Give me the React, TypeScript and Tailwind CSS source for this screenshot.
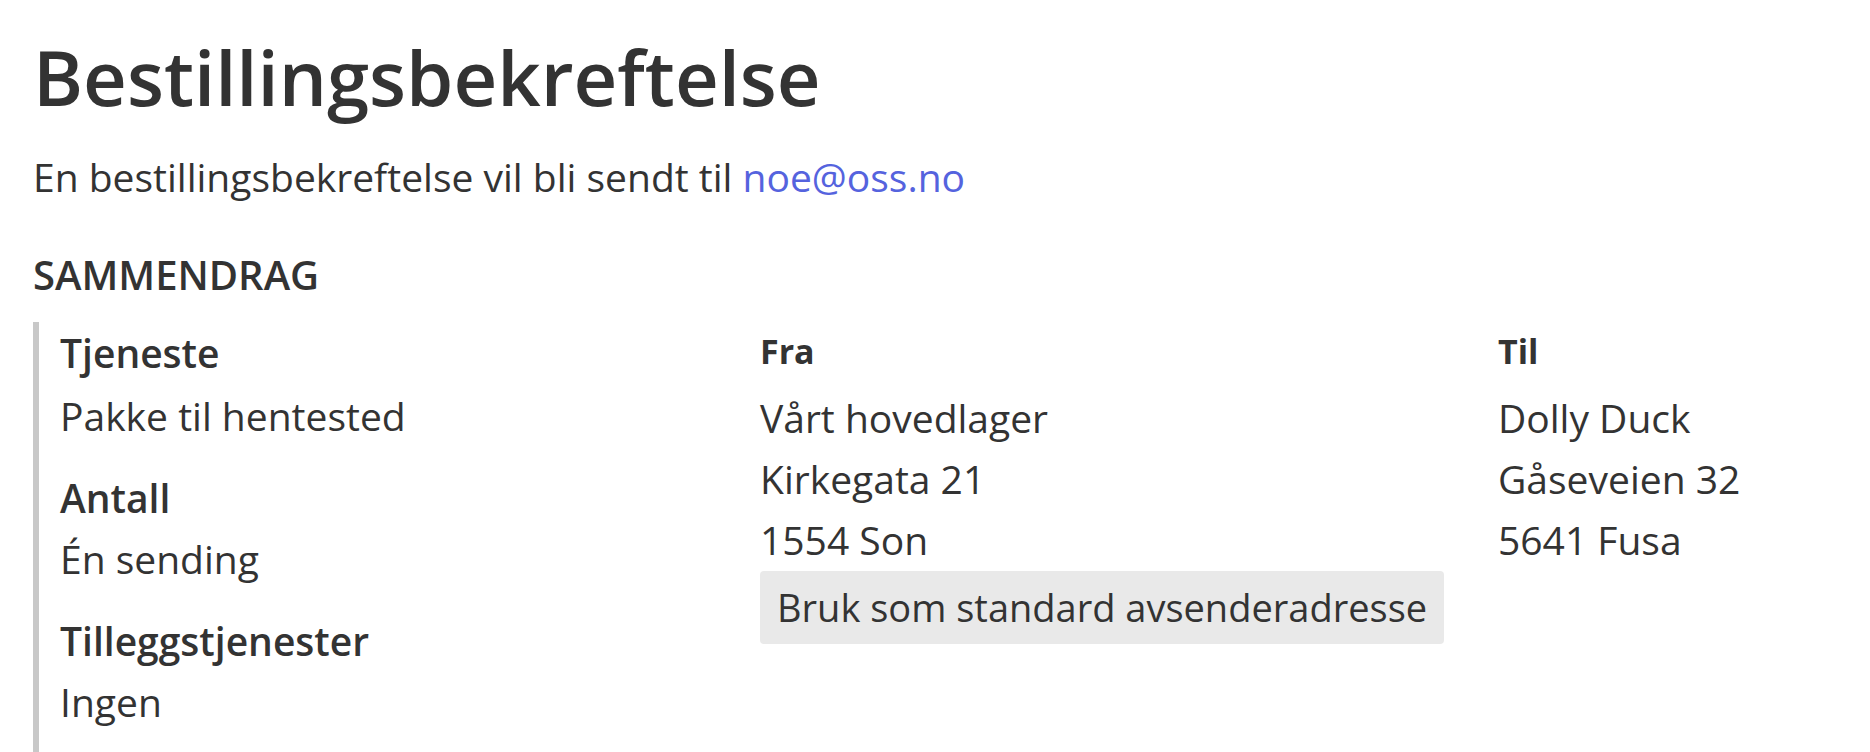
export default function App() {
  const font = { fontFamily: '"Open Sans", "Noto Sans", sans-serif' };
  return (
    <div className="min-h-screen bg-white pl-[33px] text-[#333]" style={font}>
      <h1 className="pt-[31px] text-[76px] font-semibold leading-[92px]">Bestillingsbekreftelse</h1>
      <p className="mt-[24px] text-[39px] leading-[60px]">
        En bestillingsbekreftelse vil bli sendt til{" "}
        <a href="#" className="text-[#5563de]">noe@oss.no</a>
      </p>
      <h2 className="mt-[38px] text-[40px] font-semibold leading-[60px]">SAMMENDRAG</h2>
      <div className="mt-[17px] grid grid-cols-[700px_738px_1fr] border-l-[6px] border-[#c8c8c8] pl-[21px] text-[39px] leading-[61px]">
        <div>
          <div className="font-semibold">Tjeneste</div>
          <div className="mb-[21px] pt-[2px]">Pakke til hentested</div>
          <div className="font-semibold">Antall</div>
          <div className="mb-[21px]">Én sending</div>
          <div className="font-semibold">Tilleggstjenester</div>
          <div className="pb-[21px]">Ingen</div>
        </div>
        <div>
          <div className="mb-[9px] pt-[3px] text-[34px] font-bold leading-[53px]">Fra</div>
          <div>Vårt hovedlager</div>
          <div>Kirkegata 21</div>
          <div>1554 Son</div>
          <button type="button" className="mt-[1px] rounded-[4px] bg-[#e9e9e9] px-[17px] py-[6px] text-[38px]">
            Bruk som standard avsenderadresse
          </button>
        </div>
        <div>
          <div className="mb-[9px] pt-[3px] text-[34px] font-bold leading-[53px]">Til</div>
          <div>Dolly Duck</div>
          <div>Gåseveien 32</div>
          <div>5641 Fusa</div>
        </div>
      </div>
    </div>
  );
}
